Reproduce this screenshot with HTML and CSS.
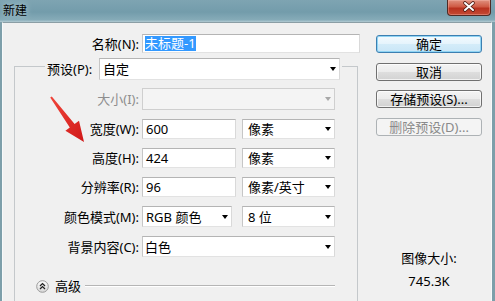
FILE: index.html
```html
<!DOCTYPE html>
<html lang="zh-CN">
<head>
<meta charset="utf-8">
<title>新建</title>
<link rel="stylesheet" href="styles.css">
</head>
<body>
<div class="window">
  <div class="titlebar">
    <span class="title">新建</span>
    <div class="close" aria-label="关闭">
      <svg width="44" height="16" viewBox="0 0 44 16">
        <path d="M18 4 L26 11 M26 4 L18 11" stroke="#4a1a12" stroke-width="3.6" stroke-linecap="round"/>
        <path d="M18 4 L26 11 M26 4 L18 11" stroke="#ffffff" stroke-width="2" stroke-linecap="round"/>
      </svg>
    </div>
  </div>
  <div class="client">
    <div class="client-inner">
      <div class="main">
        <div class="name-row">
          <span class="lbl name-lbl">名称(N):</span>
          <div class="field text name-field"><span class="sel">未标题-1</span></div>
        </div>
        <fieldset class="group">
          <legend class="preset">
            <div class="preset-inner">
              <span class="plbl">预设(P):</span>
              <div class="field combo preset-combo"><span>自定</span><i class="arrow"></i></div>
            </div>
          </legend>
          <div class="row r22 first">
            <span class="lbl dis-text">大小(I):</span>
            <div class="field combo full disabled"><i class="arrow"></i></div>
          </div>
          <div class="row">
            <span class="lbl">宽度(W):</span>
            <div class="field text num">600</div>
            <div class="field combo unit"><span>像素</span><i class="arrow"></i></div>
          </div>
          <div class="row">
            <span class="lbl">高度(H):</span>
            <div class="field text num">424</div>
            <div class="field combo unit"><span>像素</span><i class="arrow"></i></div>
          </div>
          <div class="row">
            <span class="lbl">分辨率(R):</span>
            <div class="field text num">96</div>
            <div class="field combo unit"><span>像素/英寸</span><i class="arrow"></i></div>
          </div>
          <div class="row r21">
            <span class="lbl">颜色模式(M):</span>
            <div class="field combo mode"><span>RGB 颜色</span><i class="arrow"></i></div>
            <div class="field combo unit"><span>8 位</span><i class="arrow"></i></div>
          </div>
          <div class="row r21">
            <span class="lbl">背景内容(C):</span>
            <div class="field combo full plain"><span>白色</span><i class="arrow"></i></div>
          </div>
          <div class="adv-row">
            <svg class="adv-icon" width="13" height="13" viewBox="0 0 13 13">
              <defs>
                <linearGradient id="cg" x1="0" y1="0" x2="0" y2="1">
                  <stop offset="0" stop-color="#ffffff"/>
                  <stop offset="1" stop-color="#d6d6d6"/>
                </linearGradient>
              </defs>
              <circle cx="6.5" cy="6.5" r="5.8" fill="url(#cg)" stroke="#9a9a9a" stroke-width="1"/>
              <path d="M4 6 L6.5 3.6 L9 6 M4 9 L6.5 6.6 L9 9" fill="none" stroke="#222" stroke-width="1.3"/>
            </svg>
            <span class="adv-text">高级</span>
            <span class="adv-line"></span>
          </div>
        </fieldset>
      </div>
      <div class="side">
        <div class="btn default">确定</div>
        <div class="btn">取消</div>
        <div class="btn">存储预设(S)...</div>
        <div class="btn disabled">删除预设(D)...</div>
        <div class="imgsize">
          <div class="imgsize-label">图像大小:</div>
          <div class="imgsize-value">745.3K</div>
        </div>
      </div>
    </div>
  </div>
  <svg class="pointer" width="56" height="60" viewBox="40 88 56 60">
    <defs>
      <linearGradient id="ag" x1="0" y1="0" x2="1" y2="1">
        <stop offset="0" stop-color="#f0453a"/>
        <stop offset="1" stop-color="#d01818"/>
      </linearGradient>
    </defs>
    <polygon points="50.2,97.6 69.8,127.6 65.4,130.8 84,142 79,120.8 74.6,124 51.8,96.4" fill="url(#ag)"/>
  </svg>
</div>
</body>
</html>
```

FILE: styles.css
```css
* { box-sizing: border-box; }
html, body { margin: 0; padding: 0; }
body {
  background: #f0f0f0;
  font-family: "Noto Sans", "Noto Sans CJK SC", sans-serif;
  font-size: 13px;
  line-height: 18px;
  color: #000;
}
.window {
  position: relative;
  width: 495px;
  height: 301px;
  overflow: hidden;
  background: #7fa3b0;
}
.titlebar {
  height: 22px;
  display: flex;
  justify-content: space-between;
  align-items: flex-start;
  background: linear-gradient(to bottom, #7ea4b2 0%, #739cab 55%, #86abb8 90%, #b3cbd3 100%);
}
.title {
  font-family: "Noto Sans CJK SC", sans-serif;
  font-size: 12px;
  line-height: 20px;
  padding-left: 3px;
  color: #000;
  text-shadow: 0 0 6px #c8dde4;
}
.close {
  width: 44px;
  height: 16px;
  margin-right: 4px;
  border: 1px solid #4f2a24;
  border-top: none;
  border-radius: 0 0 4px 4px;
  background: linear-gradient(to bottom, #e0917f 0%, #cf5a44 45%, #b8321f 55%, #c44a34 100%);
  box-shadow: inset 0 0 0 1px rgba(255,200,190,0.35);
}
.close svg { display: block; margin: -1px 0 0 -1px; }
.client {
  height: 279px;
  border-left: 2px solid #7d9faa;
  border-right: 3px solid #7d9faa;
}
.client-inner {
  height: 100%;
  display: flex;
  background: #f0f0f0;
  border-left: 1px solid #f7f9fa;
  border-right: 1px solid #f7f9fa;
  border-top: 1px solid #8b9ea5;
}
.main {
  width: 359px;
  padding-top: 11px;
}
.name-row {
  display: flex;
  height: 19px;
  align-items: center;
}
.lbl {
  text-align: right;
  white-space: nowrap;
}
.name-lbl { width: 136px; margin-right: 3px; }
.field {
  height: 100%;
  background: #fff;
  border: 1px solid;
  border-color: #b4b4b4 #d9d9d9 #e2e2e2 #c6c6c6;
  display: flex;
  align-items: center;
  white-space: nowrap;
}
.name-field { width: 218px; padding-left: 2px; }
.sel { background: #3399ff; color: #fff; line-height: 15px; }
.group {
  margin: 0 0 0 11px;
  padding: 0 0 30px 0;
  width: 344px;
  min-width: 0;
  border: 1px solid #c4c8cb;
}
.preset {
  margin-left: 30px;
  padding: 5px 2px 0 2px;
}
.preset-inner {
  display: flex;
  align-items: center;
  height: 22px;
}
.plbl { width: 52px; }
.preset-combo { width: 241px; padding-left: 3px; }
.arrow {
  width: 0;
  height: 0;
  margin-left: auto;
  margin-right: 3px;
  border-left: 3.5px solid transparent;
  border-right: 3.5px solid transparent;
  border-top: 4px solid #000;
}
.row {
  display: flex;
  align-items: center;
  height: 20px;
  margin-top: 9px;
}
.row.first { margin-top: 8px; }
.row.r22 { height: 22px; }
.row.r21 { height: 21px; }
.row .lbl { width: 124px; margin-right: 3px; }
.dis-text { color: #8e8e8e; }
.full { width: 193px; }
.disabled { background: #f4f4f4; border-color: #cfcfcf; }
.disabled .arrow { border-top-color: #a8a8a8; }
.num { width: 94px; padding-left: 3px; margin-right: 6px; }
.unit { width: 93px; padding-left: 5px; }
.mode { width: 90px; padding-left: 3px; margin-right: 10px; }
.plain { padding-left: 2px; }
.adv-row {
  display: flex;
  align-items: center;
  height: 14px;
  margin-top: 22px;
  padding-left: 21px;
}
.adv-icon { display: block; flex: none; }
.adv-text { margin-left: 6px; }
.adv-line {
  display: block;
  width: 250px;
  margin-left: 4px;
  height: 2px;
  border-top: 1px solid #b5b5b5;
  border-bottom: 1px solid #ffffff;
}
.side {
  width: 106px;
  margin-left: 14px;
  padding-top: 12px;
  display: flex;
  flex-direction: column;
  align-items: stretch;
}
.btn {
  height: 18px;
  line-height: 16px;
  text-align: center;
  border: 1px solid #707070;
  border-radius: 3px;
  background: linear-gradient(to bottom, #f4f4f4 0%, #ececec 48%, #dedede 52%, #d2d2d2 100%);
  box-shadow: inset 0 0 0 1px rgba(255,255,255,0.7);
  margin-top: 10px;
  white-space: nowrap;
}
.btn:first-child { margin-top: 0; }
.btn:nth-child(3) { margin-top: 9px; }
.btn.default {
  border-color: #3c7fb1;
  background: linear-gradient(to bottom, #f3fafe 0%, #e6f4fc 48%, #d4ecf9 52%, #c9e6f7 100%);
  box-shadow: inset 0 0 0 1px #8fd4f4;
}
.btn.disabled {
  border-color: #adb2b5;
  background: #f4f4f4;
  color: #8a8a8a;
  box-shadow: none;
}
.imgsize {
  margin-top: 113px;
  text-align: center;
}
.imgsize-value { margin-top: 5px; }
.pointer {
  position: absolute;
  left: 40px;
  top: 88px;
}
```
